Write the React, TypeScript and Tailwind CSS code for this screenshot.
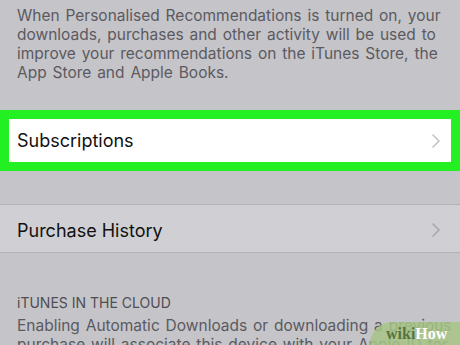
import React from "react";

const Chevron = ({ color }: { color: string }) => (
  <svg width="8" height="14" viewBox="0 0 8 14" fill="none">
    <path d="M1 1l6 6-6 6" stroke={color} strokeWidth="1.6" strokeLinecap="round" strokeLinejoin="round" />
  </svg>
);

export default function App() {
  return (
    <div
      className="relative w-[460px] h-[345px] overflow-hidden bg-[#c5c4c9]"
      style={{ fontFamily: "Inter, 'Noto Sans', sans-serif" }}
    >
      <div className="flex flex-col px-[17px] pt-[6px] text-[15.5px] leading-[19px] text-[#5b5a5f] whitespace-nowrap [word-spacing:1.5px]">
        <span>When Personalised Recommendations is turned on, your</span>
        <span>downloads, purchases and other activity will be used to</span>
        <span>improve your recommendations on the iTunes Store, the</span>
        <span>App Store and Apple Books.</span>
      </div>

      <div className="mt-[28px] bg-[#22f022] p-[9px]">
        <div className="flex h-[43px] items-center justify-between bg-white pl-[8px] pr-[11px]">
          <span className="text-[18px] text-[#111]">Subscriptions</span>
          <Chevron color="#c4c4c8" />
        </div>
      </div>

      <div className="mt-[33px] flex h-[49px] items-center justify-between border-y border-[#b3b2b6] bg-[#d0cfd3] pl-[17px] pr-[20px] pt-[3px]">
        <span className="text-[18px] text-[#111]">Purchase History</span>
        <Chevron color="#a9a8ad" />
      </div>

      <div className="mt-[39px] px-[17px] text-[14px] text-[#4e4d52] whitespace-nowrap">iTUNES IN THE CLOUD</div>
      <div className="mt-[3px] flex flex-col px-[17px] text-[15.5px] leading-[19px] text-[#5b5a5f] whitespace-nowrap [word-spacing:1.5px]">
        <span>Enabling Automatic Downloads or downloading a previous</span>
        <span>purchase will associate this device with your Apple ID for</span>
      </div>

      <div className="absolute right-0 top-[322px] flex h-[30px] w-[90px] items-start rounded-tl-[22px] bg-[#a6c486]/85 pl-[16px] pt-[2px]">
        <span
          className="text-[16px] leading-[20px] font-bold text-[#57733f]"
          style={{ fontFamily: "'Liberation Serif', serif" }}
        >
          wiki
        </span>
        <span
          className="text-[16px] leading-[20px] font-bold text-white"
          style={{ fontFamily: "'Liberation Serif', serif" }}
        >
          How
        </span>
      </div>
    </div>
  );
}
